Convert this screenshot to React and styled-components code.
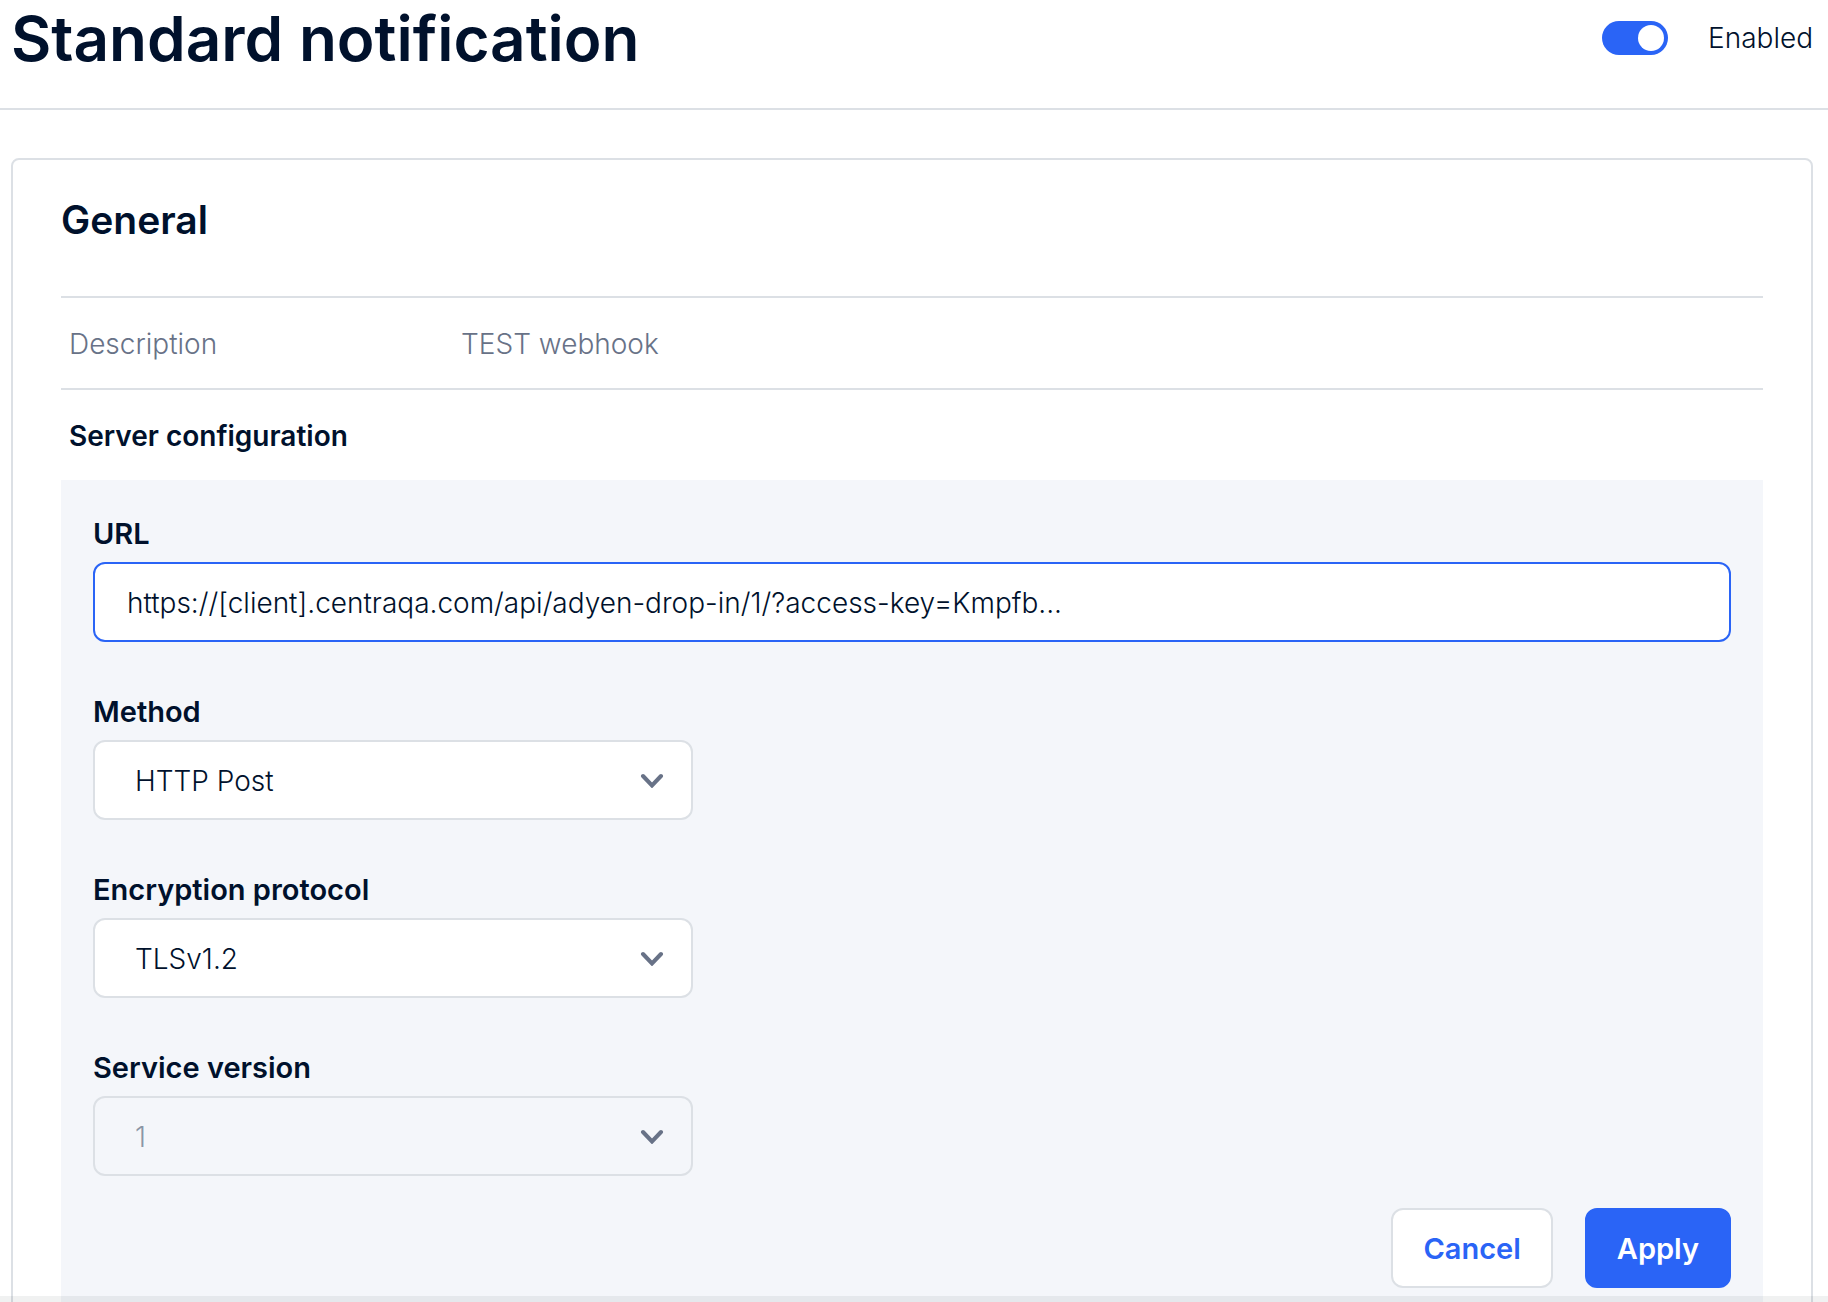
import React, { useState } from "react";
import styled, { createGlobalStyle } from "styled-components";

const color = {
  ink: "#00112c",
  muted: "#687287",
  disabled: "#8b95a5",
  line: "#dce0e5",
  blue: "#2a64f6",
  panel: "#f4f6fa",
  surface: "#ffffff",
};

const GlobalStyle = createGlobalStyle`
  *, *::before, *::after {
    box-sizing: border-box;
  }

  body {
    margin: 0;
    background: ${color.surface};
    color: ${color.ink};
    font-family: Inter, "Liberation Sans", sans-serif;
    font-size: 28px;
    font-weight: 300;
    line-height: 40px;
  }
`;

const Page = styled.main`
  display: flex;
  flex-direction: column;
  height: 100vh;
  overflow: hidden;
`;

const Header = styled.header`
  display: flex;
  flex-shrink: 0;
  align-items: flex-start;
  justify-content: space-between;
  height: 110px;
  padding: 0 15px 0 11px;
  border-bottom: 2px solid ${color.line};
`;

const Title = styled.h1`
  margin: 0;
  font-size: 62px;
  font-weight: 600;
  line-height: 78px;
`;

const ToggleLabel = styled.label`
  display: flex;
  align-items: center;
  gap: 40px;
  padding-top: 18px;
`;

const Toggle = styled.input`
  display: flex;
  align-items: center;
  justify-content: flex-start;
  width: 66px;
  height: 34px;
  margin: 0;
  padding: 4px;
  appearance: none;
  border-radius: 17px;
  background: ${color.muted};
  cursor: pointer;

  &::before {
    content: "";
    width: 26px;
    height: 26px;
    border-radius: 50%;
    background: ${color.surface};
  }

  &:checked {
    justify-content: flex-end;
    background: ${color.blue};
  }
`;

const Card = styled.section`
  flex-shrink: 0;
  margin: 48px 15px 48px 11px;
  padding: 36px 48px 48px;
  border: 2px solid ${color.line};
  border-radius: 8px;
`;

const CardTitle = styled.h2`
  margin: 0 0 52px;
  font-size: 39px;
  font-weight: 600;
  line-height: 48px;
`;

const Details = styled.dl`
  display: grid;
  grid-template-columns: 392px 1fr;
  margin: 0;
  padding: 26px 8px 24px;
  border-top: 2px solid ${color.line};
  border-bottom: 2px solid ${color.line};
  color: ${color.muted};
`;

const Term = styled.dt`
  margin: 0;
`;

const Value = styled.dd`
  margin: 0;
`;

const SectionTitle = styled.h3`
  margin: 0;
  padding: 26px 8px 24px;
  font-size: 28px;
  font-weight: 600;
  line-height: 40px;
`;

const Form = styled.form`
  display: flex;
  flex-direction: column;
  gap: 48px;
  padding: 32px 32px 48px;
  background: ${color.panel};
`;

const Field = styled.div`
  display: flex;
  flex-direction: column;
  gap: 8px;
  padding-top: 2px;
`;

const FieldLabel = styled.label`
  font-size: 29px;
  font-weight: 600;
`;

const TextInput = styled.input`
  width: 100%;
  height: 80px;
  padding: 2px 32px 0;
  border: 2px solid ${(props) => (props.$active ? color.blue : color.line)};
  border-radius: 12px;
  outline: none;
  background: ${color.surface};
  color: inherit;
  font: inherit;
`;

const SelectBox = styled.div`
  display: grid;
  align-items: center;
  width: 600px;
  max-width: 100%;

  > * {
    grid-area: 1 / 1;
  }
`;

const Select = styled.select`
  width: 100%;
  height: 80px;
  padding: 2px 72px 0 40px;
  appearance: none;
  border: 2px solid ${color.line};
  border-radius: 12px;
  background: ${color.surface};
  color: ${color.ink};
  font: inherit;

  &:disabled {
    background: ${color.panel};
    color: ${color.disabled};
    opacity: 1;
  }
`;

const Chevron = styled.svg`
  justify-self: end;
  margin-right: 29px;
  pointer-events: none;
`;

const Actions = styled.div`
  display: flex;
  justify-content: flex-end;
  gap: 32px;
  margin-top: -16px;
`;

const Button = styled.button`
  height: 80px;
  padding: 2px 30px 0;
  border: 2px solid ${(props) => (props.$primary ? color.blue : color.line)};
  border-radius: 12px;
  background: ${(props) => (props.$primary ? color.blue : color.surface)};
  color: ${(props) => (props.$primary ? color.surface : color.blue)};
  font: inherit;
  font-size: 29px;
  font-weight: 600;
  cursor: pointer;
`;

const BottomBar = styled.div`
  position: fixed;
  right: 0;
  bottom: 0;
  left: 0;
  height: 6px;
  background: rgba(0, 10, 20, 0.06);
  pointer-events: none;
`;

function SelectField({ id, label, options, disabled }) {
  return (
    <Field>
      <FieldLabel htmlFor={id}>{label}</FieldLabel>
      <SelectBox>
        <Select id={id} disabled={disabled} defaultValue={options[0]}>
          {options.map((option) => (
            <option key={option} value={option}>
              {option}
            </option>
          ))}
        </Select>
        <Chevron width="24" height="16" viewBox="0 0 24 16" fill="none" aria-hidden="true">
          <path
            d="M3 4 12 13.5 21 4"
            stroke={color.muted}
            strokeWidth="4"
            strokeLinecap="round"
            strokeLinejoin="miter"
          />
        </Chevron>
      </SelectBox>
    </Field>
  );
}

export default function App() {
  const [enabled, setEnabled] = useState(true);
  const [url, setUrl] = useState(
    "https://[client].centraqa.com/api/adyen-drop-in/1/?access-key=Kmpfb..."
  );

  return (
    <>
      <GlobalStyle />
      <Page>
        <Header>
          <Title>Standard notification</Title>
          <ToggleLabel htmlFor="enabled">
            <Toggle
              id="enabled"
              type="checkbox"
              role="switch"
              checked={enabled}
              onChange={(event) => setEnabled(event.target.checked)}
            />
            Enabled
          </ToggleLabel>
        </Header>
        <Card>
          <CardTitle>General</CardTitle>
          <Details>
            <Term>Description</Term>
            <Value>TEST webhook</Value>
          </Details>
          <SectionTitle>Server configuration</SectionTitle>
          <Form onSubmit={(event) => event.preventDefault()}>
            <Field>
              <FieldLabel htmlFor="url">URL</FieldLabel>
              <TextInput
                id="url"
                type="text"
                $active
                value={url}
                onChange={(event) => setUrl(event.target.value)}
              />
            </Field>
            <SelectField id="method" label="Method" options={["HTTP Post"]} />
            <SelectField id="encryption" label="Encryption protocol" options={["TLSv1.2"]} />
            <SelectField id="version" label="Service version" options={["1"]} disabled />
            <Actions>
              <Button type="button">Cancel</Button>
              <Button type="submit" $primary>
                Apply
              </Button>
            </Actions>
          </Form>
        </Card>
      </Page>
      <BottomBar />
    </>
  );
}
